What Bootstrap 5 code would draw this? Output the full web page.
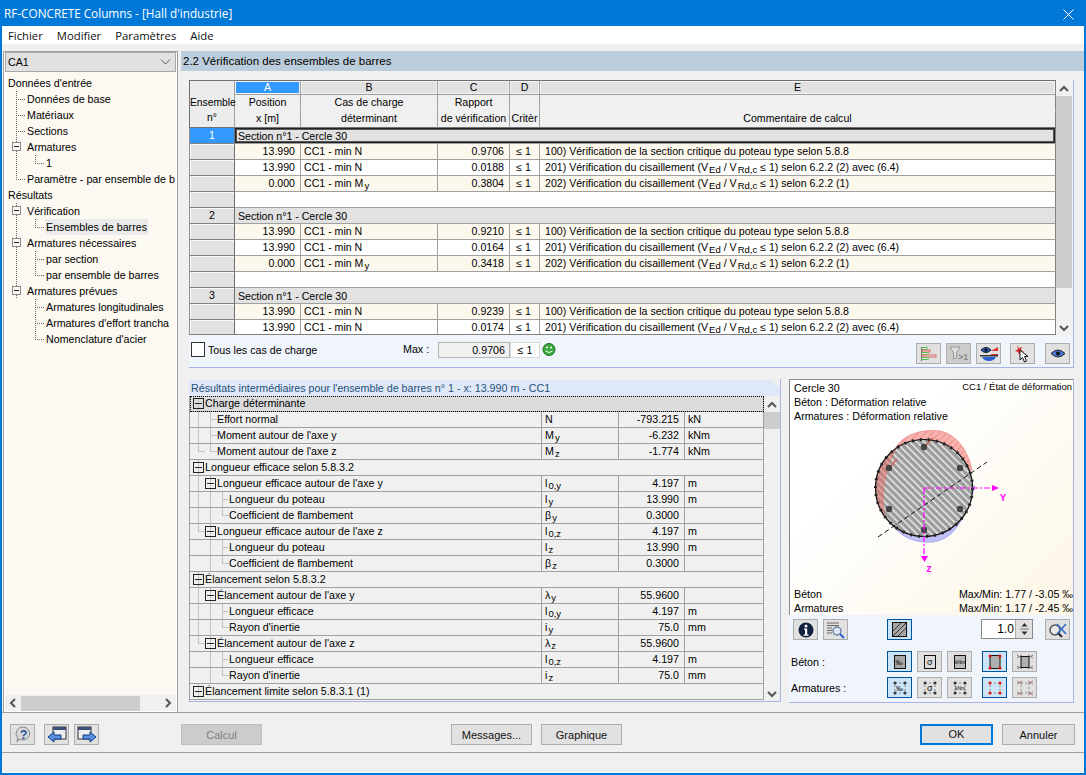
<!DOCTYPE html>
<html lang="fr">
<head>
    <meta charset="UTF-8">
    <title>RF-CONCRETE Columns - [Hall d'industrie]</title>
    <link href="https://cdn.jsdelivr.net/npm/bootstrap@5.3.2/dist/css/bootstrap.min.css" rel="stylesheet">
    <script src="https://cdn.jsdelivr.net/npm/bootstrap@5.3.2/dist/js/bootstrap.bundle.min.js"></script>
    <style>
        html, body { margin: 0; width: 1086px; height: 775px; overflow: hidden; }
        body { font-family: "Liberation Sans", sans-serif; font-size: 10.7px; line-height: 15px; color: #000; background: #f0f0f0; }
        sub { font-size: 9.5px; bottom: -2px; line-height: 0; margin-left: 1px; }

        /* fenetre */
        .app-win { width: 1086px; height: 775px; border: solid #0078d7; border-width: 0 2px 2px 2px; }
        .app-title { height: 26px; margin: 0 -2px; padding: 5px 4px 0 4px; background: #0078d7; color: #fff; font: 11.75px/16px "Open Sans", sans-serif; }
        .app-menu { height: 18px; background: #fff; font: 11.3px/16px "Open Sans", sans-serif; padding: 2px 0 0 6px; gap: 14px; }
        .app-menu a { color: #111; text-decoration: none; }
        .app-main { height: 669px; border-bottom: 1px solid #a0a0a0; }

        /* panneau gauche */
        .side { width: 175px; margin: 7px 0 0 1px; height: 661px; border: 1px solid #a0a0a0; border-bottom: 0; box-shadow: inset 0 0 0 1px #fff; padding: 0 1px 1px 1px; }
        .side-combo { height: 20px; background: #e1e1e1; border: 1px solid #a8a8a8; padding: 2px 0 0 2px; }
        .side-tree { height: 623px; background: #fbf9f1; padding: 3px 0 0 3px; white-space: nowrap; overflow: hidden; }
        .tree-row { height: 16px; line-height: 16px; }
        .tree-sel { background: #ebebeb; padding: 0 1px; margin-left: -1px; }
        .tg { flex: 0 0 19px; height: 16px; background-repeat: no-repeat; }
        .tg-v, .tg-b { background-image: repeating-linear-gradient(to bottom, #666 0 1px, transparent 1px 2px); background-size: 1px 16px; background-position: 8px 0; }
        .tg-t { background-image: repeating-linear-gradient(to bottom, #666 0 1px, transparent 1px 2px), repeating-linear-gradient(to right, #666 0 1px, transparent 1px 2px); background-size: 1px 16px, 10px 1px; background-position: 8px 0, 8px 8px; }
        .tg-l { background-image: repeating-linear-gradient(to bottom, #666 0 1px, transparent 1px 2px), repeating-linear-gradient(to right, #666 0 1px, transparent 1px 2px); background-size: 1px 9px, 10px 1px; background-position: 8px 0, 8px 8px; }
        .tg-box { display: block; width: 9px; height: 9px; margin: 3px 0 0 4px; border: 1px solid #8a8a8a; background: #fbf9f1 linear-gradient(#222, #222) center / 5px 1px no-repeat; }
        .side-hbar { height: 16px; background: #f0f0f0; }
        .hbar-thumb { width: 119px; height: 15px; background: #cdcdcd; }

        /* zone droite */
        .page-head { height: 20px; background: #bccddb; padding: 3px 0 0 2px; font-size: 11.5px; }
        .right-col { width: 903px; margin: 7px 0 0 3px; }
        .top-panel { width: 885px; height: 288px; margin: 9px 0 0 8px; background: #f0f4fb; border-right: 1px solid #a8b4e8; border-bottom: 1px solid #a8b4e8; }
        .grid-wrap { width: 867px; height: 255px; overflow: hidden; background: #fff; border-bottom: 1px solid #808080; }
        .grid-tbl { width: 867px; table-layout: fixed; border-collapse: separate; border-spacing: 0; margin: 0; font-size: 10.6px; }
        .gc-46 { width: 46px; } .gc-66 { width: 66px; } .gc-137 { width: 137px; } .gc-72 { width: 72px; } .gc-30 { width: 30px; } .gc-516 { width: 516px; }
        .grid-tbl th, .grid-tbl td { height: 16px; padding: 0 5px 0 3px; border: 0; border-right: 1px solid #a0a0a0; border-bottom: 1px solid #a0a0a0; font-weight: 400; white-space: nowrap; overflow: hidden; vertical-align: middle; line-height: 15px; }
        .grid-tbl th:last-child, .grid-tbl td:last-child { border-right-color: #808080; }
        .gh-top th { border-top: 1px solid #707070; }
        .grid-tbl .gh-letter { height: 15px; line-height: 13px; background: #e1e1e1; text-align: center; box-shadow: inset 0 0 0 1px #f4f4f4; padding: 0; }
        .grid-tbl .gh-on { background: #3399ff; color: #fff; }
        .grid-tbl .gh-cell { background: #f0f0f0; text-align: center; padding: 0; border-bottom-color: #f0f0f0; vertical-align: top; }
        .grid-tbl .gh-end { height: 17px; border-bottom-color: #707070; }
        .grid-tbl .gh-corner { background: #ececec; border-left: 1px solid #707070; text-align: center; padding: 14px 0 0 0; vertical-align: top; border-bottom-color: #707070; overflow: visible; font-size: 10.3px; }
        .grid-tbl .rh { background: #e1e1e1; border-left: 1px solid #909090; border-right-color: #707070; border-bottom-color: #808080; box-shadow: inset 1px 1px 0 #fafafa; text-align: center; padding: 0; }
        .grid-tbl .rh-on { background: #3399ff; color: #fff; box-shadow: none; }
        .grid-tbl .g-sec { background: #e2e2e2; padding-top: 1px; line-height: 14px; }
        .grid-tbl .g-focus { box-shadow: inset 0 0 0 1px #222, inset 0 0 0 2px #555; }
        .grid-tbl .cream { background: #fdf8ee; }
        .num { text-align: right; }
        .ctr { text-align: center !important; }
        .grid-tbl .cm { padding-left: 5px; }
        .vbar { width: 16px; background: #f0f0f0; }
        .vbar-btn { height: 15px; }
        .vbar-thumb { background: #cdcdcd; }
        #top-thumb { height: 192px; margin-top: 1px; }
        #low-thumb { height: 17px; margin-top: 1px; }
        .tool-row { height: 32px; padding: 7px 0 0 2px; }
        .chk-wrap { width: 212px; }
        .chk { width: 14px; height: 15px; border: 1px solid #333; background: #fff; margin-right: 3px; }
        .chk-lbl { margin-top: 1px; }
        .max-lbl { width: 35px; }
        .max-val { width: 72px; height: 16px; background: #f0f0f0; border: 1px solid #b4b4b4; text-align: right; padding-right: 4px; }
        .max-crit { width: 30px; height: 16px; background: #fff; border: 1px solid #d8d8d8; text-align: center; }
        .smile { margin: 1px 0 0 2px; }
        .tool-icons { margin: 1px 3px 0 auto; gap: 5px; }
        .tool-icons > .tool-gap { margin-left: 4px; }
        .tool-icons > .tool-gap2 { margin-left: 5px; }
        .win-btn { border-radius: 0; padding: 0; background: #e1e1e1; border: 1px solid #adadad; color: #111; font-size: 11px; line-height: 18px; --bs-btn-hover-bg: #e1e1e1; }
        .ico-btn { width: 25px; height: 21px; display: flex; align-items: center; justify-content: center; }
        .ico-on { background: #cce4f7; border-color: #005499; }
        .ico-off { background: #ccc; }

        /* resultats intermediaires */
        .low-row { margin: 11px 0 0 8px; gap: 8px; }
        .low-panel { width: 592px; height: 323px; border-right: 1px solid #a8b4e8; border-bottom: 1px solid #a8b4e8; }
        .low-head { height: 16px; margin-top: 1px; padding: 1px 0 0 2px; background: #dfe8f6; color: #24507c; clip-path: polygon(0 0, 583px 0, 591px 9px, 591px 100%, 0 100%); }
        .low-wrap { width: 575px; height: 305px; overflow: hidden; border-left: 1px solid #a0a0a0; }
        .low-tbl { width: 574px; table-layout: fixed; border-collapse: separate; border-spacing: 0; margin: 0; }
        .lc-352 { width: 352px; } .lc-77 { width: 77px; } .lc-66 { width: 66px; } .lc-79 { width: 79px; }
        .low-tbl td { height: 16px; padding: 0 5px 0 3px; background: #f0f0f0; border: 0; border-right: 1px solid #a0a0a0; border-bottom: 1px solid #a0a0a0; white-space: nowrap; overflow: hidden; line-height: 15px; vertical-align: middle; }
        .low-tbl .lt-nm { padding: 0 0 0 3px; }
        .low-tbl .lt-sel { background: #dcdcdc; outline: 1px dotted #000; outline-offset: -1px; }
        .lg { flex: 0 0 12px; height: 15px; background-repeat: no-repeat; }
        .lg-v, .lg-b { background-image: linear-gradient(#c4c4c4, #c4c4c4); background-size: 1px 16px; background-position: 5px 0; }
        .lg-t { background-image: linear-gradient(#c4c4c4, #c4c4c4), linear-gradient(#c4c4c4, #c4c4c4); background-size: 1px 16px, 11px 1px; background-position: 5px 0, 5px 7px; }
        .lg-l { background-image: linear-gradient(#c4c4c4, #c4c4c4), linear-gradient(#c4c4c4, #c4c4c4); background-size: 1px 8px, 11px 1px; background-position: 5px 0, 5px 7px; }
        .lg-box { display: block; width: 11px; height: 11px; margin: 2px 0 0 0; border: 1px solid #222; background: linear-gradient(#222, #222) center / 7px 1px no-repeat; }

        /* graphique */
        .gfx-panel { width: 285px; height: 324px; border-right: 1px solid #a8b4e8; border-bottom: 1px solid #a8b4e8; background: #f0f4fb; }
        .gfx-canvas { position: relative; height: 236px; border-top: 1px solid #8a8a8a; border-left: 1px solid #8a8a8a; padding: 1px 0 0 4px; background: linear-gradient(135deg, #fff 30%, #fdf6e6 100%); }
        .gfx-svg { position: absolute; left: 0; top: 0; }
        .gfx-top, .gfx-bottom { position: relative; line-height: 14px; }
        .gfx-ttl { font-size: 9.5px; line-height: 11px; padding-right: 1px; }
        .gfx-ctrl { padding: 4px 3px 0 4px; }
        .ctrl-row { height: 21px; }
        .ctrl-gap { margin-bottom: 11px; }
        .ctrl-gap2 { margin-bottom: 5px; }
        .ctrl-lbl { width: 96px; margin-left: -2px; padding-top: 1px; }
        .ctrl-s { margin-left: 5px; }
        .ctrl-w { margin-left: 10px; }
        .ctrl-hatch { margin-left: 39px; }
        .spin-box { width: 52px; height: 20px; border: 1px solid #8a8a8a; background: #fff; text-align: right; padding: 2px 18px 0 0; position: relative; font-size: 12px; }
        .spin-arrows { position: absolute; right: 0; top: 0; width: 17px; height: 18px; background: #e1e1e1; border-left: 1px solid #adadad; }
        .spin-next { margin-left: 12px; }

        /* bas */
        .foot-row { height: 40px; padding: 11px 9px 0 8px; border-bottom: 1px solid #a0a0a0; }
        .foot-nav { margin-left: 9px; }
        .foot-nav2 { margin-left: 5px; }
        .txt-btn { width: 81px; height: 21px; font-size: 11px; }
        .btn-off { background: #ccc; border-color: #bfbfbf; color: #808080; }
        .calc-btn { margin-left: 82px; }
        .msg-btn { margin-left: 189px; }
        .gr-btn { margin-left: 9px; }
        .btn-def { border: 2px solid #0078d7; line-height: 17px; width: 73px; }
        .btn-std { width: 73px; margin-left: 9px; }
        .foot-strip { height: 20px; border-bottom: 1px solid #fff; }
    </style>
</head>
<body>
<div class="app-win d-flex flex-column">
    <div class="app-title d-flex justify-content-between">
        <span>RF-CONCRETE Columns - [Hall d'industrie]</span>
        <svg width="11" height="11" viewBox="0 0 11 11" class="me-2 mt-1"><path d="M0.5 0.5l10 10M10.5 0.5l-10 10" stroke="#fff" fill="none"/></svg>
    </div>
    <nav class="app-menu d-flex">
        <a href="#">Fichier</a><a href="#">Modifier</a><a href="#">Paramètres</a><a href="#">Aide</a>
    </nav>

    <div class="app-main d-flex">
        <!-- arborescence -->
        <div class="side">
            <div class="side-combo d-flex justify-content-between">
                <span>CA1</span>
                <svg width="11" height="6" viewBox="0 0 11 6" class="me-1 mt-1"><path d="M1 0.5l4.5 4.5 4.5-4.5" stroke="#555" fill="none"/></svg>
            </div>
            <div class="side-tree" id="tree"></div>
            <div class="side-hbar d-flex align-items-center">
                <svg width="16" height="10" viewBox="0 0 16 10"><path d="M10 1l-4 4 4 4" stroke="#555" stroke-width="2" fill="none"/></svg>
                <div class="hbar-thumb"></div>
                <svg class="ms-auto" width="16" height="10" viewBox="0 0 16 10"><path d="M6 1l4 4-4 4" stroke="#555" stroke-width="2" fill="none"/></svg>
            </div>
        </div>

        <div class="right-col">
            <div class="page-head">2.2 Vérification des ensembles de barres</div>

            <div class="top-panel">
                <div class="d-flex">
                    <div class="grid-wrap">
                        <table class="grid-tbl">
                            <colgroup><col class="gc-46"><col class="gc-66"><col class="gc-137"><col class="gc-72"><col class="gc-30"><col class="gc-516"></colgroup>
                            <thead>
                                <tr class="gh-top">
                                    <th rowspan="3" class="gh-corner">Ensemble<br>n°</th>
                                    <th class="gh-letter gh-on">A</th>
                                    <th class="gh-letter">B</th>
                                    <th class="gh-letter">C</th>
                                    <th class="gh-letter">D</th>
                                    <th class="gh-letter">E</th>
                                </tr>
                                <tr>
                                    <th class="gh-cell">Position</th>
                                    <th class="gh-cell">Cas de charge</th>
                                    <th class="gh-cell">Rapport</th>
                                    <th class="gh-cell"></th>
                                    <th class="gh-cell"></th>
                                </tr>
                                <tr>
                                    <th class="gh-cell gh-end">x [m]</th>
                                    <th class="gh-cell gh-end">déterminant</th>
                                    <th class="gh-cell gh-end">de vérification</th>
                                    <th class="gh-cell gh-end">Critèr</th>
                                    <th class="gh-cell gh-end">Commentaire de calcul</th>
                                </tr>
                            </thead>
                            <tbody id="grid-body"></tbody>
                        </table>
                    </div>
                    <div class="vbar d-flex flex-column align-items-center">
                        <div class="vbar-btn"><svg width="10" height="15" viewBox="0 0 10 15"><path d="M1 10l4-4 4 4" stroke="#555" stroke-width="2" fill="none"/></svg></div>
                        <div class="vbar-thumb w-100" id="top-thumb"></div>
                        <div class="vbar-btn mt-auto"><svg width="10" height="15" viewBox="0 0 10 15"><path d="M1 5l4 4 4-4" stroke="#555" stroke-width="2" fill="none"/></svg></div>
                    </div>
                </div>
                <div class="tool-row d-flex align-items-start">
                    <div class="chk-wrap d-flex"><span class="chk"></span><span class="chk-lbl">Tous les cas de charge</span></div>
                    <span class="max-lbl">Max :</span>
                    <span class="max-val">0.9706</span><span class="max-crit">≤ 1</span>
                    <svg class="smile" width="14" height="14" viewBox="0 0 14 14"><circle cx="7" cy="6.5" r="6" fill="#3aa83a" stroke="#1c6e1c"/><circle cx="5" cy="4.5" r="1" fill="#fff"/><circle cx="9" cy="4.5" r="1" fill="#fff"/><path d="M3.5 8q3.5 3 7 0" stroke="#fff" fill="none"/></svg>
                    <div class="d-flex tool-icons">
                        <button class="btn win-btn ico-btn" type="button"><svg width="18" height="16" viewBox="0 0 18 16"><path d="M1.5 1v14" stroke="#666"/><rect x="2" y="1.500" width="5" height="2" fill="#d8efd8" stroke="#5cb85c"/><rect x="2" y="4" width="8" height="2" fill="#f6dcdc" stroke="#d86a6a"/><rect x="2" y="6.500" width="6" height="2" fill="#d8efd8" stroke="#5cb85c"/><rect x="2" y="9" width="14" height="2" fill="#f6dcdc" stroke="#d86a6a"/><rect x="2" y="11.500" width="6" height="2" fill="#d8efd8" stroke="#5cb85c"/></svg></button>
                        <button class="btn win-btn ico-btn ico-off" type="button"><svg width="20" height="16" viewBox="0 0 20 16"><path d="M1 1h10L7.500 7v5L4.500 13V7z" fill="#ddd" stroke="#999"/><text x="9" y="14" font-size="9" font-weight="700" fill="#888" font-family="Liberation Sans">&gt;1</text></svg></button>
                        <button class="btn win-btn ico-btn" type="button"><svg width="20" height="17" viewBox="0 0 20 17"><path d="M12 6l7-4v4zM12 9h7v1.500h-7z" fill="#d33"/><path d="M2 5q5-5 10 0q-5 5-10 0z" fill="#2a5fd0" stroke="#111"/><circle cx="7" cy="5" r="1.600" fill="#111"/><path d="M1 10h18v1.500H1z" fill="#333"/><path d="M3 12h14q-2 4-7 4t-7-4z" fill="#2a5fd0"/></svg></button>
                        <button class="btn win-btn ico-btn tool-gap" type="button"><svg width="18" height="18" viewBox="0 0 18 18"><path d="M3 0l2 3 3-1-1 3 3 2-4 0-1 3-1-3-3-1 3-2z" fill="#d33"/><path d="M6 5v10l2.500-2.500 2 4.500 2-1-2-4.500h3.500z" fill="#fff" stroke="#111"/></svg></button>
                        <button class="btn win-btn ico-btn tool-gap2" type="button"><svg width="16" height="11" viewBox="0 0 16 11"><path d="M1 5.500q7-7 14 0q-7 7-14 0z" fill="#4a78d8" stroke="#222"/><circle cx="8" cy="5.500" r="2" fill="#111"/></svg></button>
                    </div>
                </div>
            </div>

            <div class="low-row d-flex">
                <div class="low-panel">
                    <div class="low-head">Résultats intermédiaires pour l'ensemble de barres n° 1 - x: 13.990 m - CC1</div>
                    <div class="d-flex">
                        <div class="low-wrap">
                            <table class="low-tbl">
                                <colgroup><col class="lc-352"><col class="lc-77"><col class="lc-66"><col class="lc-79"></colgroup>
                                <tbody id="low-body"></tbody>
                            </table>
                        </div>
                        <div class="vbar d-flex flex-column align-items-center">
                            <div class="vbar-btn"><svg width="10" height="15" viewBox="0 0 10 15"><path d="M1 10l4-4 4 4" stroke="#555" stroke-width="2" fill="none"/></svg></div>
                            <div class="vbar-thumb w-100" id="low-thumb"></div>
                            <div class="vbar-btn mt-auto"><svg width="10" height="15" viewBox="0 0 10 15"><path d="M1 5l4 4 4-4" stroke="#555" stroke-width="2" fill="none"/></svg></div>
                        </div>
                    </div>
                </div>

                <div class="gfx-panel">
                    <div class="gfx-canvas d-flex flex-column justify-content-between">
                        <svg class="gfx-svg" width="283" height="235" viewBox="790 380 283 235">
                            <defs>
                                <pattern id="hatch" width="5" height="5" patternUnits="userSpaceOnUse" patternTransform="rotate(-45)">
                                    <rect width="5" height="5" fill="#9c9c9c"/><rect width="1.500" height="5" fill="#ececec"/>
                                </pattern>
                                <pattern id="hatch-r" width="5" height="5" patternUnits="userSpaceOnUse" patternTransform="rotate(45)">
                                    <rect width="5" height="5" fill="#f7b2ae"/><rect width="1" height="5" fill="#ef8f8a"/>
                                </pattern>
                            </defs>
                            <path d="M895 449C903 434 922 429 940 431C958 435 968 452 972 470L924 488z" fill="url(#hatch-r)" stroke="#ee9a96"/>
                            <path d="M890 523C902 538 915 543 932 542C950 540 962 528 975 486L924 488z" fill="#c0c0f8" stroke="#a8a8f0"/>
                            <circle cx="924" cy="488" r="48.500" fill="url(#hatch)"/>
                            <path d="M897 448A48.500 48.500 0 0 0 887 520C880 500 885 470 897 448z" fill="#e86a62" fill-opacity=".5"/>
                            <path d="M889 468l8-9M924 447l9-9" stroke="#d9605a" stroke-width="1.500"/>
                            <circle cx="924" cy="488" r="48.500" fill="none" stroke="#111" stroke-width="1.200"/>
                            <circle cx="924" cy="488" r="48.500" fill="none" stroke="#222" stroke-width="3" stroke-dasharray="2 6"/>
                            <g fill="#444"><circle cx="924" cy="447" r="3.200"/><circle cx="960" cy="468" r="3.200"/><circle cx="960" cy="509" r="3.200"/><circle cx="924" cy="530" r="3.200"/><circle cx="889" cy="509" r="3.200"/><circle cx="889" cy="468" r="3.200"/></g>
                            <path d="M878 537L987 462" stroke="#111" stroke-dasharray="5 3"/>
                            <path d="M924 488h69M924 488v69" stroke="#f0f" stroke-width="1.200" stroke-dasharray="6 2 2 2"/>
                            <path d="M992 485l7 3-7 3zM921 556h7l-3.500 6z" fill="#f0f"/>
                            <text x="1000" y="501" font-family="Liberation Mono" font-size="10" font-weight="700" fill="#f0f">Y</text>
                            <text x="926" y="572" font-family="Liberation Mono" font-size="10" font-weight="700" fill="#f0f">z</text>
                        </svg>
                        <div class="gfx-top">
                            <div class="d-flex justify-content-between"><span>Cercle 30</span><span class="gfx-ttl">CC1 / État de déformation</span></div>
                            <div>Béton : Déformation relative</div>
                            <div>Armatures : Déformation relative</div>
                        </div>
                        <div class="gfx-bottom">
                            <div class="d-flex justify-content-between"><span>Béton</span><span>Max/Min: 1.77 / -3.05 ‰</span></div>
                            <div class="d-flex justify-content-between"><span>Armatures</span><span>Max/Min: 1.17 / -2.45 ‰</span></div>
                        </div>
                    </div>
                    <div class="gfx-ctrl">
                        <div class="ctrl-row ctrl-gap d-flex">
                            <button class="btn win-btn ico-btn" type="button"><svg width="16" height="16" viewBox="0 0 16 16"><circle cx="8" cy="8" r="7.500" fill="#10203f"/><circle cx="8" cy="4" r="1.500" fill="#fff"/><path d="M6 6.500h3.200v6h1.300v1.200H5.500v-1.200H7v-4.800H6z" fill="#fff"/></svg></button>
                            <button class="btn win-btn ico-btn ctrl-s" type="button"><svg width="20" height="18" viewBox="0 0 20 18"><path d="M1 2h12M1 4.500h12M1 7h5M1 9.500h5M1 12h5" stroke="#666"/><circle cx="11" cy="10" r="4" fill="#dbe6f6" stroke="#6a7fa0" stroke-width="1.400"/><path d="M14 13l4 4" stroke="#2a5fd0" stroke-width="2"/></svg></button>
                            <button class="btn win-btn ico-btn ico-on ctrl-hatch" type="button"><svg width="15" height="15" viewBox="0 0 15 15"><rect x=".5" y=".5" width="14" height="14" fill="#a6a6a6" stroke="#111"/><path d="M1 9l8-8M1 14l13-13M6 14l8-8" stroke="#333"/></svg></button>
                            <div class="spin-box ms-auto">1.0<span class="spin-arrows d-flex flex-column align-items-center justify-content-center"><svg width="9" height="16" viewBox="0 0 9 16"><path d="M4.500 2l3 3.500h-6zM4.500 14l3-3.500h-6z" fill="#333"/><path d="M0 8h9" stroke="#777"/></svg></span></div>
                            <button class="btn win-btn ico-btn spin-next" type="button"><svg width="20" height="18" viewBox="0 0 20 18"><circle cx="7" cy="9" r="5" fill="#e8e8e8" stroke="#555" stroke-width="1.500"/><path d="M10 12l4 4" stroke="#222" stroke-width="2"/><path d="M9 3l9 10M18 3l-9 10" stroke="#3a70c8" stroke-width="1.800"/></svg></button>
                        </div>
                        <div class="ctrl-row ctrl-gap2 d-flex align-items-center" id="beton-row"></div>
                        <div class="ctrl-row d-flex align-items-center" id="arm-row"></div>
                    </div>
                </div>
            </div>
        </div>
    </div>

    <div class="foot-row d-flex">
        <button class="btn win-btn ico-btn" type="button"><svg width="18" height="18" viewBox="0 0 18 18"><path d="M9 1a7 6.500 0 1 1-4 12l-2 3 .5-4.500A7 6.500 0 0 1 9 1z" fill="#d8d8d8" stroke="#888"/><text x="6" y="12.500" font-size="12" font-weight="700" fill="#26509a" font-family="Liberation Sans">?</text></svg></button>
        <button class="btn win-btn ico-btn foot-nav" type="button"><svg width="20" height="18" viewBox="0 0 20 18"><rect x="6" y="1" width="13" height="12" fill="#eee" stroke="#333"/><rect x="6" y="1" width="13" height="3" fill="#3f4f78"/><path d="M1 11l6-5v3h7v4H7v3z" fill="#5b8fe0" stroke="#123a8a"/></svg></button>
        <button class="btn win-btn ico-btn foot-nav2" type="button"><svg width="20" height="18" viewBox="0 0 20 18"><rect x="1" y="1" width="13" height="12" fill="#eee" stroke="#333"/><rect x="1" y="1" width="13" height="3" fill="#3f4f78"/><path d="M19 11l-6-5v3H6v4h7v3z" fill="#5b8fe0" stroke="#123a8a"/></svg></button>
        <button class="btn win-btn txt-btn btn-off calc-btn" type="button">Calcul</button>
        <button class="btn win-btn txt-btn msg-btn" type="button">Messages...</button>
        <button class="btn win-btn txt-btn gr-btn" type="button">Graphique</button>
        <button class="btn win-btn txt-btn btn-def ms-auto" type="button">OK</button>
        <button class="btn win-btn txt-btn btn-std" type="button">Annuler</button>
    </div>
    <div class="foot-strip"></div>
</div>

<script>
    // Arborescence de gauche
    const TREE = [
        ["Données d'entrée", ""], ["Données de base", "t"], ["Matériaux", "t"], ["Sections", "t"],
        ["Armatures", "b"], ["1", "vl"], ["Paramètre - par ensemble de b", "l"],
        ["Résultats", ""], ["Vérification", "b"], ["Ensembles de barres", "vl", true],
        ["Armatures nécessaires", "b"], ["par section", "vt"], ["par ensemble de barres", "vl"],
        ["Armatures prévues", "b"], ["Armatures longitudinales", "_t"], ["Armatures d'effort trancha", "_t"],
        ["Nomenclature d'acier", "_l"]
    ];
    document.getElementById('tree').innerHTML = TREE.map(([label, guides, sel]) => {
        const cells = [...guides].map(g => g === 'b'
            ? '<span class="tg tg-b"><span class="tg-box"></span></span>'
            : `<span class="tg tg-${g}"></span>`).join('');
        return `<div class="tree-row d-flex">${cells}<span class="${sel ? 'tree-sel' : ''}">${label}</span></div>`;
    }).join('');

    // Tableau principal
    const V_CRIT = 'V<sub>Ed</sub> / V<sub>Rd,c</sub> ≤ 1';
    const COMMENTS = [
        '100) Vérification de la section critique du poteau type selon 5.8.8',
        `201) Vérification du cisaillement (${V_CRIT}) selon 6.2.2 (2) avec (6.4)`,
        `202) Vérification du cisaillement (${V_CRIT}) selon 6.2.2 (1)`
    ];
    const SETS = [
        { n: 1, rows: [['13.990', 'N', '0.9706'], ['13.990', 'N', '0.0188'], ['0.000', 'M<sub>y</sub>', '0.3804']], tail: true },
        { n: 2, rows: [['13.990', 'N', '0.9210'], ['13.990', 'N', '0.0164'], ['0.000', 'M<sub>y</sub>', '0.3418']], tail: true },
        { n: 3, rows: [['13.990', 'N', '0.9239'], ['13.990', 'N', '0.0174']], tail: false }
    ];
    let gridHtml = '';
    SETS.forEach(set => {
        const on = set.n === 1;
        gridHtml += `<tr><td class="rh ${on ? 'rh-on' : ''}">${set.n}</td><td colspan="5" class="g-sec ${on ? 'g-focus' : ''}">Section n°1 - Cercle 30</td></tr>`;
        set.rows.forEach((r, i) => {
            const bg = i % 2 === 0 ? 'cream' : '';
            gridHtml += `<tr><td class="rh"></td><td class="num ${bg}">${r[0]}</td><td class="${bg}">CC1 - min ${r[1]}</td><td class="num ${bg}">${r[2]}</td><td class="ctr ${bg}">≤ 1</td><td class="cm ${bg}">${COMMENTS[i]}</td></tr>`;
        });
        if (set.tail) gridHtml += '<tr><td class="rh"></td><td colspan="5"></td></tr>';
    });
    document.getElementById('grid-body').innerHTML = gridHtml;

    // Résultats intermédiaires: [texte, guides, symbole, valeur, unité]
    const LOW = [
        ['Charge déterminante', 'b'],
        ['Effort normal', 'vt', 'N', '-793.215', 'kN'],
        ["Moment autour de l'axe y", 'vt', 'M<sub>y</sub>', '-6.232', 'kNm'],
        ["Moment autour de l'axe z", 'll', 'M<sub>z</sub>', '-1.774', 'kNm'],
        ['Longueur efficace selon 5.8.3.2', 'b'],
        ["Longueur efficace autour de l'axe y", 'vb', 'l<sub>0,y</sub>', '4.197', 'm'],
        ['Longueur du poteau', 'vvt', 'l<sub>y</sub>', '13.990', 'm'],
        ['Coefficient de flambement', 'vvl', 'β<sub>y</sub>', '0.3000', ''],
        ["Longueur efficace autour de l'axe z", 'lb', 'l<sub>0,z</sub>', '4.197', 'm'],
        ['Longueur du poteau', '_vt', 'l<sub>z</sub>', '13.990', 'm'],
        ['Coefficient de flambement', '_vl', 'β<sub>z</sub>', '0.3000', ''],
        ['Élancement selon 5.8.3.2', 'b'],
        ["Élancement autour de l'axe y", 'vb', 'λ<sub>y</sub>', '55.9600', ''],
        ['Longueur efficace', 'vvt', 'l<sub>0,y</sub>', '4.197', 'm'],
        ["Rayon d'inertie", 'vvl', 'i<sub>y</sub>', '75.0', 'mm'],
        ["Élancement autour de l'axe z", 'lb', 'λ<sub>z</sub>', '55.9600', ''],
        ['Longueur efficace', '_vt', 'l<sub>0,z</sub>', '4.197', 'm'],
        ["Rayon d'inertie", '_vl', 'i<sub>z</sub>', '75.0', 'mm'],
        ['Élancement limite selon 5.8.3.1 (1)', 'b']
    ];
    document.getElementById('low-body').innerHTML = LOW.map((r, i) => {
        const cells = [...r[1]].map(g => g === 'b'
            ? '<span class="lg lg-b"><span class="lg-box"></span></span>'
            : `<span class="lg lg-${g}"></span>`).join('');
        const name = `<div class="d-flex">${cells}<span>${r[0]}</span></div>`;
        if (r.length === 2) return `<tr><td colspan="4" class="lt-nm ${i === 0 ? 'lt-sel' : ''}">${name}</td></tr>`;
        return `<tr><td class="lt-nm">${name}</td><td>${r[2]}</td><td class="num">${r[3]}</td><td>${r[4]}</td></tr>`;
    }).join('');

    // Boutons du bas du graphique
    const GLYPHS = {
        strain: '<rect x="2.500" y="1.500" width="11" height="13" fill="#a6a6a6" stroke="#111"/><text x="3.500" y="10.500" font-size="7" font-family="Liberation Sans">‰</text>',
        sigma: '<rect x="2.500" y="1.500" width="11" height="13" fill="#ddd" stroke="#111"/><text x="5" y="11" font-size="9" font-family="Liberation Sans">σ</text>',
        force: '<rect x="2.500" y="1.500" width="11" height="13" fill="#bbb" stroke="#111"/><text x="3" y="9.500" font-size="5" font-family="Liberation Sans">kNm</text>',
        dots: '<rect x="3" y="1.500" width="10" height="13" fill="#b0b0b0" stroke="#111"/><g fill="#d11"><circle cx="3" cy="2" r="1.500"/><circle cx="13" cy="2" r="1.500"/><circle cx="3" cy="14" r="1.500"/><circle cx="13" cy="14" r="1.500"/></g>',
        dotsX: '<rect x="4" y="2.500" width="8" height="11" fill="#b0b0b0" stroke="#111"/><path d="M0 1l5 3M5 1L0 4M11 1l5 3M16 1l-5 3M0 12l5 3M5 12l-5 3M11 12l5 3M16 12l-5 3" stroke="#555" stroke-width=".7"/>'
    };
    const ARM = s => `<rect x="3" y="3" width="10" height="10" fill="none" stroke="#888" stroke-dasharray="2 2"/><g fill="#333"><circle cx="3" cy="3" r="1.500"/><circle cx="13" cy="3" r="1.500"/><circle cx="3" cy="13" r="1.500"/><circle cx="13" cy="13" r="1.500"/></g>${s}`;
    const ARM_DOTS = '<rect x="3" y="3" width="10" height="10" fill="none" stroke="#888" stroke-dasharray="2 2"/><g fill="#d11"><circle cx="3" cy="3" r="1.500"/><circle cx="13" cy="3" r="1.500"/><circle cx="3" cy="13" r="1.500"/><circle cx="13" cy="13" r="1.500"/></g>';
    const ARM_X = '<rect x="4" y="3" width="8" height="10" fill="none" stroke="#888" stroke-dasharray="2 2"/><path d="M0 1l5 3M5 1L0 4M11 1l5 3M16 1l-5 3M0 12l5 3M5 12l-5 3M11 12l5 3M16 12l-5 3" stroke="#844" stroke-width=".7"/>';
    function ctrlRow(id, label, icons) {
        const gaps = ['', 'ctrl-s', 'ctrl-s', 'ctrl-w', 'ctrl-s'];
        document.getElementById(id).innerHTML = `<span class="ctrl-lbl">${label}</span>` + icons.map((svg, i) =>
            `<button class="btn win-btn ico-btn ${i === 0 || i === 3 ? 'ico-on' : ''} ${gaps[i]}" type="button"><svg width="16" height="16" viewBox="0 0 16 16">${svg}</svg></button>`).join('');
    }
    ctrlRow('beton-row', 'Béton :', [GLYPHS.strain, GLYPHS.sigma, GLYPHS.force, GLYPHS.dots, GLYPHS.dotsX]);
    ctrlRow('arm-row', 'Armatures :', [ARM('<text x="4" y="11" font-size="7" font-family="Liberation Sans">‰</text>'), ARM('<text x="5" y="11" font-size="9" font-family="Liberation Sans">σ</text>'), ARM('<text x="3" y="10" font-size="5" font-family="Liberation Sans">kNm</text>'), ARM_DOTS, ARM_X]);
</script>
</body>
</html>
